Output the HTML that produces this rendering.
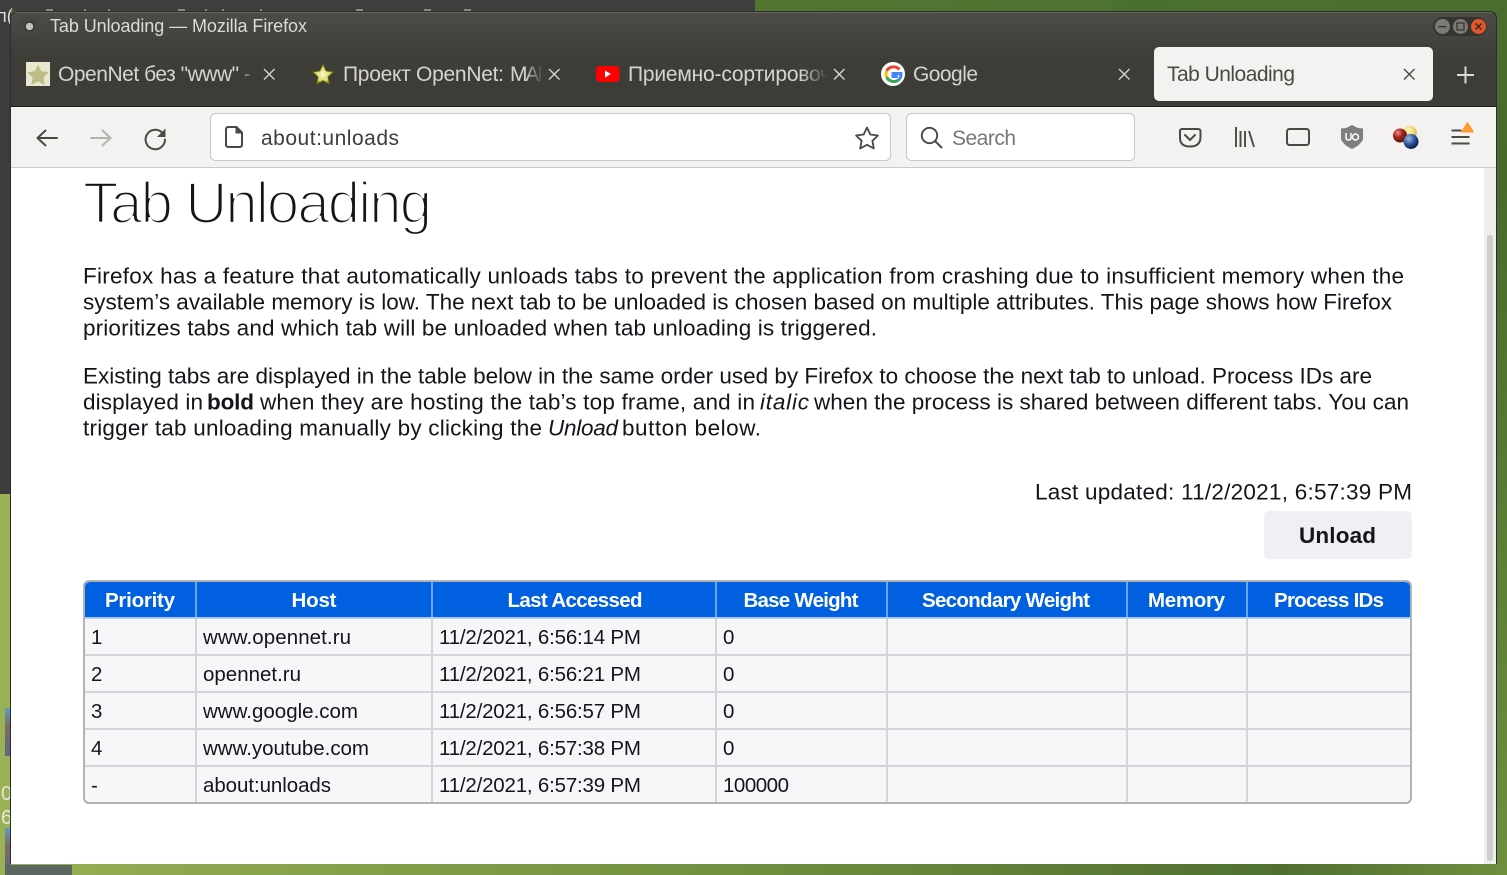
<!DOCTYPE html>
<html><head><meta charset="utf-8"><title>Tab Unloading — Mozilla Firefox</title>
<style>
html,body{margin:0;padding:0;width:1507px;height:875px;overflow:hidden;background:#5a7d35}
svg{display:block;font-family:"Liberation Sans","DejaVu Sans",sans-serif}
.b{font-size:22.5px;fill:#15141a}
.t{font-size:20.5px;fill:#15141a}
.h{font-size:20.5px;font-weight:bold;fill:#fff;text-anchor:middle}
.tab{font-size:21px;fill:#d6d4cf}
.ln{fill:none;stroke-linecap:round}
</style></head><body>
<svg width="1507" height="875" viewBox="0 0 1507 875" xmlns="http://www.w3.org/2000/svg">
<defs>
<linearGradient id="tb" x1="0" y1="0" x2="0" y2="1"><stop offset="0" stop-color="#4e4c46"/><stop offset=".45" stop-color="#3e3d38"/><stop offset="1" stop-color="#3d3c37"/></linearGradient>
<linearGradient id="gr" x1="0" y1="0" x2="1" y2="1"><stop offset="0" stop-color="#5a7f36"/><stop offset=".6" stop-color="#466a2c"/><stop offset="1" stop-color="#6f8f3f"/></linearGradient>
<linearGradient id="bot" x1="0" x2="1"><stop offset="0" stop-color="#98af54"/><stop offset=".5" stop-color="#6f8f3f"/><stop offset=".85" stop-color="#4f7030"/><stop offset="1" stop-color="#6f8f3f"/></linearGradient>
<linearGradient id="th" x1="0" y1="0" x2="0" y2="1"><stop offset="0" stop-color="#5f9ac0"/><stop offset=".4" stop-color="#7a6a62"/><stop offset="1" stop-color="#5a6a80"/></linearGradient>
<linearGradient id="fade1" x1="0" x2="1"><stop offset="0" stop-color="#3d3c37" stop-opacity="0"/><stop offset="1" stop-color="#3d3c37"/></linearGradient>
<radialGradient id="r1" cx=".35" cy=".3" r=".8"><stop offset="0" stop-color="#e88"/><stop offset=".45" stop-color="#a5221c"/><stop offset="1" stop-color="#401008"/></radialGradient>
<radialGradient id="r2" cx=".35" cy=".3" r=".85"><stop offset="0" stop-color="#9bd"/><stop offset=".5" stop-color="#2a4f9a"/><stop offset="1" stop-color="#001"/></radialGradient>
<radialGradient id="r3" cx=".4" cy=".35" r=".8"><stop offset="0" stop-color="#fff7c0"/><stop offset=".6" stop-color="#e8cf6a"/><stop offset="1" stop-color="#a08a30"/></radialGradient>
<radialGradient id="st" cx=".5" cy=".5" r=".55"><stop offset="0" stop-color="#fff8c8"/><stop offset=".6" stop-color="#d8d86a"/><stop offset="1" stop-color="#6a6a08"/></radialGradient>
</defs>

<!-- desktop -->
<rect width="1507" height="875" fill="url(#gr)"/>
<rect x="0" y="864" width="1507" height="11" fill="url(#bot)"/>
<rect x="0" y="490" width="11" height="385" fill="#9ab155"/>
<rect x="0" y="0" width="11" height="494" fill="#3c3c3c"/>
<rect x="0" y="0" width="755" height="11" fill="#3e3e3e"/>
<path d="M1110 11l16-11h42l28 11z" fill="#4a7030"/>
<g fill="#8a8a8a"><rect x="46" y="9" width="7" height="2"/><rect x="84" y="9" width="2" height="2"/><rect x="108" y="9" width="2" height="2"/><rect x="178" y="9" width="7" height="2"/><rect x="205" y="9" width="2" height="2"/><rect x="222" y="9" width="2" height="2"/><rect x="260" y="9" width="2" height="2"/><rect x="356" y="9" width="7" height="2"/><rect x="424" y="9" width="7" height="2"/><rect x="464" y="9" width="7" height="2"/></g>
<rect x="5" y="708" width="6" height="48" fill="url(#th)"/>
<rect x="5" y="828" width="6" height="47" fill="url(#th)"/>
<rect x="5" y="865" width="67" height="10" fill="#5c6660"/>
<text x="1" y="800" font-size="20" fill="#e6e6da">0</text>
<text x="1" y="824" font-size="20" fill="#e6e6da">6</text>
<text x="-3" y="22" font-size="18" fill="#ddd">п(</text>

<!-- window -->
<path d="M10 864V19q0-8 8-8H1489q8 0 8 8V864z" fill="#2c2c2a"/>
<path d="M11 107V20q0-8 8-8H1488q8 0 8 8v87z" fill="url(#tb)"/>
<rect x="15" y="12" width="1477" height="1" fill="#66645e"/>
<rect x="11" y="106" width="1485" height="1" fill="#1d1d1b"/>

<!-- title bar -->
<rect x="21" y="17" width="17" height="18" rx="3" fill="#474642"/>
<circle cx="29.500" cy="26.500" r="5" fill="#2f2e2b"/>
<circle cx="29.500" cy="26.500" r="3.800" fill="#c4c2bc"/>
<text x="50" y="32" font-size="18" fill="#dcdad4" textLength="257" lengthAdjust="spacing">Tab Unloading — Mozilla Firefox</text>
<rect x="1433" y="17" width="54" height="19" rx="9.500" fill="#353431"/>
<circle cx="1442.500" cy="26.500" r="7.500" fill="#7b7a75"/>
<rect x="1438.500" y="26" width="8" height="1.300" fill="#2f2f2c"/>
<circle cx="1460.500" cy="26.500" r="7.500" fill="#7b7a75"/>
<rect x="1457" y="23" width="7" height="7" fill="none" stroke="#33332f" stroke-width="1.200"/>
<circle cx="1478.500" cy="26.500" r="7.500" fill="#e0572a"/>
<path d="M1475.500 23.500l6 6m0-6l-6 6" stroke="#3a2018" stroke-width="1.300"/>

<!-- tabs -->
<rect x="26" y="62" width="24" height="24" fill="#e8e8d0"/>
<path d="M38 64.500l3.300 6.800 7.500 1-5.400 5.200 1.300 7.500-6.700-3.600-6.700 3.600 1.300-7.500-5.400-5.200 7.500-1z" fill="#bdbd88"/>
<text x="58" y="81" class="tab" textLength="193" lengthAdjust="spacing">OpenNet без "www" -</text>
<rect x="240" y="60" width="14" height="28" fill="url(#fade1)"/>
<path d="M264 69l10.500 10.500m0-10.500L264 79.500" stroke="#d6d4cf" stroke-width="1.400"/>

<path d="M323 64l3.200 6.900 7.500.9-5.600 5.100 1.500 7.500-6.600-3.700-6.600 3.700 1.500-7.500-5.600-5.100 7.500-.9z" fill="url(#st)" stroke="#5e5e08" stroke-width="1"/>
<text x="343" y="81" class="tab" textLength="161" lengthAdjust="spacing">Проект OpenNet:</text>
<text x="510" y="81" class="tab" textLength="46" lengthAdjust="spacing">MAIN</text>
<rect x="525" y="60" width="18" height="28" fill="url(#fade1)"/>
<rect x="543" y="60" width="22" height="28" fill="#3d3c37"/>
<path d="M549 69l10.500 10.500m0-10.500L549 79.500" stroke="#d6d4cf" stroke-width="1.400"/>

<rect x="596" y="66" width="23.500" height="16" rx="4" fill="#f00"/>
<path d="M605 70.500v7l6-3.500z" fill="#fff"/>
<text x="628" y="81" class="tab" textLength="203" lengthAdjust="spacing">Приемно-сортировоч</text>
<rect x="800" y="60" width="28" height="28" fill="url(#fade1)"/>
<rect x="828" y="60" width="20" height="28" fill="#3d3c37"/>
<path d="M834 69l10.500 10.500m0-10.500L834 79.500" stroke="#d6d4cf" stroke-width="1.400"/>

<circle cx="893" cy="74" r="12" fill="#fff"/>
<path d="M899.500 69.500a8 8 0 0 0-12.800 1.300" fill="none" stroke="#ea4335" stroke-width="3"/>
<path d="M886.700 70.800a8 8 0 0 0 0 6.400" fill="none" stroke="#fbbc05" stroke-width="3"/>
<path d="M886.700 77.200a8 8 0 0 0 11.800 2.800" fill="none" stroke="#34a853" stroke-width="3"/>
<path d="M898.500 80a8 8 0 0 0 2.500-6.500h-8v3h4.800" fill="none" stroke="#4285f4" stroke-width="3"/>
<text x="913" y="81" class="tab" textLength="65" lengthAdjust="spacing">Google</text>
<path d="M1119 69l10.500 10.500m0-10.500L1119 79.500" stroke="#d6d4cf" stroke-width="1.400"/>

<rect x="1154" y="47" width="279" height="54" rx="5" fill="#f3f2f0"/>
<text x="1167" y="81" font-size="21" fill="#4a4945" textLength="128" lengthAdjust="spacing">Tab Unloading</text>
<path d="M1404 69l10.500 10.500m0-10.500L1404 79.500" stroke="#4a4945" stroke-width="1.400"/>
<path d="M1465.500 66.500v17M1457 75h17" stroke="#dcdad4" stroke-width="2"/>

<!-- toolbar -->
<rect x="11" y="107" width="1485" height="60" fill="#f3f2f0"/>
<rect x="11" y="167" width="1485" height="1" fill="#cbcac7"/>
<path d="M57 138H37.500M45.500 130.500l-8 7.500 8 7.500" class="ln" stroke="#4a4945" stroke-width="2"/>
<path d="M91 138h19.500M102.500 130.500l8 7.500-8 7.500" class="ln" stroke="#b3b2af" stroke-width="2"/>
<path d="M162 132.500a9.700 9.700 0 1 0 3 7" class="ln" stroke="#4a4945" stroke-width="2"/>
<path d="M165.500 128.500v8.500h-8.500z" fill="#4a4945"/>

<rect x="210.500" y="113.500" width="680" height="47" rx="5" fill="#fff" stroke="#c9c8c5"/>
<path d="M226 129.500q0-2.500 2.500-2.500h8l5.500 5.500v12q0 2.500-2.500 2.500h-11q-2.500 0-2.500-2.500z" fill="none" stroke="#4a4945" stroke-width="2"/>
<path d="M236 127v6h6" fill="#4a4945" stroke="#4a4945" stroke-width="1"/>
<text x="261" y="145" font-size="21" fill="#3e3d3a" textLength="138" lengthAdjust="spacing">about:unloads</text>
<path d="M867 127.500l3.300 7 7.600 1-5.500 5.300 1.400 7.700-6.800-3.700-6.800 3.700 1.400-7.700-5.500-5.300 7.600-1z" fill="none" stroke="#4a4945" stroke-width="1.800" stroke-linejoin="round"/>

<rect x="906.500" y="113.500" width="228" height="47" rx="5" fill="#fff" stroke="#c9c8c5"/>
<circle cx="929.500" cy="135.500" r="7.700" fill="none" stroke="#4a4945" stroke-width="1.900"/>
<path d="M935 141l6.500 6.500" stroke="#4a4945" stroke-width="2" stroke-linecap="round"/>
<text x="952" y="145" font-size="21" fill="#77767a" textLength="64" lengthAdjust="spacing">Search</text>

<path d="M1182 129h16q2.500 0 2.500 2.500v5.500q0 9.500-10.500 9.500T1180 137v-5.500q0-2.500 2-2.500z" fill="none" stroke="#4a4945" stroke-width="2"/>
<path d="M1185 135l5 5 5-5" class="ln" stroke="#4a4945" stroke-width="2"/>
<path d="M1236 127v20M1240.500 131v16M1245 131v16M1249 131l5 16" stroke="#4a4945" stroke-width="1.900" fill="none"/>
<rect x="1287" y="129" width="22" height="16" rx="2.500" fill="none" stroke="#4a4945" stroke-width="2"/>
<path d="M1352 125l6 3 5 .5v11q-3 6-11 9.500-8-3.500-11-9.500v-11l5-.5z" fill="#7e7e7e"/>
<path d="M1346 133v4.500q0 2.500 2.500 2.500t2.500-2.500V133" fill="none" stroke="#fff" stroke-width="1.500"/>
<circle cx="1355.500" cy="137" r="3" fill="none" stroke="#fff" stroke-width="1.500"/>
<circle cx="1410" cy="132.500" r="6.800" fill="url(#r3)"/>
<circle cx="1400" cy="135.500" r="7" fill="url(#r1)"/>
<circle cx="1411" cy="141.500" r="7.500" fill="url(#r2)"/>
<path d="M1451.500 130.500h10M1451.500 137h18M1451.500 143.500h18" stroke="#4a4945" stroke-width="2"/>
<path d="M1467.500 122.500l6 9.500h-12z" fill="#ff9a2e" stroke="#ff9a2e" stroke-linejoin="round"/>

<!-- content -->
<rect x="11" y="168" width="1473" height="696" fill="#fff"/>
<rect x="1484" y="168" width="12" height="696" fill="#eee"/>
<rect x="1487" y="235" width="6" height="626" rx="3" fill="#cdcdcd"/>

<text x="83" y="223" font-size="58" fill="#15141a" stroke="#fff" stroke-width="2.300" textLength="349" lengthAdjust="spacing">Tab Unloading</text>

<g transform="translate(0,-0.5)">
<text x="83" y="284" class="b" textLength="1321" lengthAdjust="spacing">Firefox has a feature that automatically unloads tabs to prevent the application from crashing due to insufficient memory when the</text>
<text x="83" y="310" class="b" textLength="1309" lengthAdjust="spacing">system’s available memory is low. The next tab to be unloaded is chosen based on multiple attributes. This page shows how Firefox</text>
<text x="83" y="336" class="b" textLength="794" lengthAdjust="spacing">prioritizes tabs and which tab will be unloaded when tab unloading is triggered.</text>

<text x="83" y="384" class="b" textLength="1289" lengthAdjust="spacing">Existing tabs are displayed in the table below in the same order used by Firefox to choose the next tab to unload. Process IDs are</text>
<text x="83" y="410" class="b" textLength="120" lengthAdjust="spacing">displayed in</text>
<text x="207" y="410" class="b" font-weight="bold" textLength="47" lengthAdjust="spacing">bold</text>
<text x="260" y="410" class="b" textLength="495" lengthAdjust="spacing">when they are hosting the tab’s top frame, and in</text>
<text x="760" y="410" class="b" font-style="italic" textLength="49" lengthAdjust="spacing">italic</text>
<text x="814" y="410" class="b" textLength="595" lengthAdjust="spacing">when the process is shared between different tabs. You can</text>
<text x="83" y="436" class="b" textLength="459" lengthAdjust="spacing">trigger tab unloading manually by clicking the</text>
<text x="548" y="436" class="b" font-style="italic" textLength="70" lengthAdjust="spacing">Unload</text>
<text x="622" y="436" class="b" textLength="139" lengthAdjust="spacing">button below.</text>

<text x="1035" y="500" class="b" textLength="377" lengthAdjust="spacing">Last updated: 11/2/2021, 6:57:39 PM</text>
</g>

<rect x="1264" y="511" width="148" height="48" rx="5" fill="#f0f0f4"/>
<text x="1299" y="543" font-size="22.500" font-weight="bold" fill="#15141a" textLength="77" lengthAdjust="spacing">Unload</text>

<!-- table -->
<rect x="84" y="581" width="1327" height="222" rx="5" fill="#f7f7f9" stroke="#9c9c9f" stroke-width="1.500"/>
<path d="M85 618v-31q0-5 5-5H1405q5 0 5 5v31z" fill="#0060df"/>
<g fill="#d5d5d9">
<rect x="85" y="617" width="1325" height="2"/>
<rect x="85" y="654" width="1325" height="2"/>
<rect x="85" y="691" width="1325" height="2"/>
<rect x="85" y="728" width="1325" height="2"/>
<rect x="85" y="765" width="1325" height="2"/>
<rect x="195" y="617" width="2" height="185"/>
<rect x="431" y="617" width="2" height="185"/>
<rect x="715" y="617" width="2" height="185"/>
<rect x="886" y="617" width="2" height="185"/>
<rect x="1126" y="617" width="2" height="185"/>
<rect x="1246" y="617" width="2" height="185"/>
</g>
<g fill="#6ba3ec">
<rect x="195" y="582" width="2" height="35"/>
<rect x="431" y="582" width="2" height="35"/>
<rect x="715" y="582" width="2" height="35"/>
<rect x="886" y="582" width="2" height="35"/>
<rect x="1126" y="582" width="2" height="35"/>
<rect x="1246" y="582" width="2" height="35"/>
</g>
<rect x="85" y="617" width="1325" height="1.500" fill="#a9c8f0"/>

<text x="140" y="607" class="h" textLength="70" lengthAdjust="spacing">Priority</text>
<text x="314" y="607" class="h" textLength="45" lengthAdjust="spacing">Host</text>
<text x="575" y="607" class="h" textLength="135" lengthAdjust="spacing">Last Accessed</text>
<text x="801" y="607" class="h" textLength="115" lengthAdjust="spacing">Base Weight</text>
<text x="1006" y="607" class="h" textLength="168" lengthAdjust="spacing">Secondary Weight</text>
<text x="1186.500" y="607" class="h" textLength="77" lengthAdjust="spacing">Memory</text>
<text x="1329" y="607" class="h" textLength="110" lengthAdjust="spacing">Process IDs</text>

<text x="91" y="644" class="t">1</text>
<text x="203" y="644" class="t" textLength="148" lengthAdjust="spacing">www.opennet.ru</text>
<text x="439" y="644" class="t" textLength="202" lengthAdjust="spacing">11/2/2021, 6:56:14 PM</text>
<text x="723" y="644" class="t">0</text>

<text x="91" y="681" class="t">2</text>
<text x="203" y="681" class="t" textLength="98" lengthAdjust="spacing">opennet.ru</text>
<text x="439" y="681" class="t" textLength="202" lengthAdjust="spacing">11/2/2021, 6:56:21 PM</text>
<text x="723" y="681" class="t">0</text>

<text x="91" y="718" class="t">3</text>
<text x="203" y="718" class="t" textLength="155" lengthAdjust="spacing">www.google.com</text>
<text x="439" y="718" class="t" textLength="202" lengthAdjust="spacing">11/2/2021, 6:56:57 PM</text>
<text x="723" y="718" class="t">0</text>

<text x="91" y="755" class="t">4</text>
<text x="203" y="755" class="t" textLength="166" lengthAdjust="spacing">www.youtube.com</text>
<text x="439" y="755" class="t" textLength="202" lengthAdjust="spacing">11/2/2021, 6:57:38 PM</text>
<text x="723" y="755" class="t">0</text>

<text x="91" y="792" class="t">-</text>
<text x="203" y="792" class="t" textLength="128" lengthAdjust="spacing">about:unloads</text>
<text x="439" y="792" class="t" textLength="202" lengthAdjust="spacing">11/2/2021, 6:57:39 PM</text>
<text x="723" y="792" class="t" textLength="66" lengthAdjust="spacing">100000</text>
</svg>
</body></html>
